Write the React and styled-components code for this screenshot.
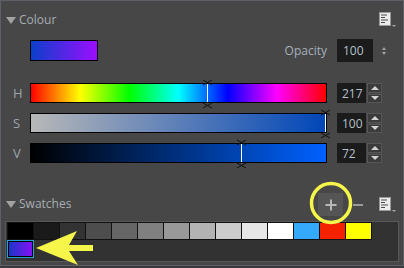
import React from 'react';
import styled, { createGlobalStyle } from 'styled-components';

const GlobalStyle = createGlobalStyle`
  html, body {
    margin: 0;
    padding: 0;
    background: #3a3a3a;
  }
  body {
    font-family: "Open Sans", "Noto Sans", sans-serif;
  }
`;

const Panel = styled.div`
  position: relative;
  box-sizing: border-box;
  width: 404px;
  height: 266px;
  background: #474747;
  border: 1px solid #5c6168;
  overflow: hidden;
`;

const SectionHeader = styled.div`
  display: flex;
  align-items: center;
  height: ${p => p.h}px;
  margin-top: ${p => p.top}px;
  padding: 0 6px 0 5px;
`;

const Caret = styled.span`
  width: 0;
  height: 0;
  border-left: 5.5px solid transparent;
  border-right: 5.5px solid transparent;
  border-top: 7px solid #a3a3a3;
  margin-right: 3px;
`;

const Title = styled.span`
  flex: 1;
  font-size: 12px;
  color: #a7adb3;
  line-height: 1;
  margin-top: -1px;
`;

const PreviewRow = styled.div`
  display: flex;
  align-items: center;
  height: 23px;
  margin-top: 10px;
  padding: 0 17px 0 29px;
`;

const Preview = styled.div`
  box-sizing: border-box;
  width: 68px;
  height: 21px;
  border: 1px solid #000;
  background: linear-gradient(to right, #0b3fca, #9c0eff);
`;

const Spacer = styled.div`
  flex: 1;
`;

const Label = styled.span`
  font-size: 12px;
  color: #a4b0bc;
`;

const NumBox = styled.div`
  box-sizing: border-box;
  width: ${p => p.w}px;
  height: ${p => p.h}px;
  background: #1b1b1b;
  color: #b7c2ce;
  font-size: 12px;
  display: flex;
  align-items: center;
  padding-left: ${p => p.pad}px;
  margin-left: ${p => p.ml || 0}px;
`;

const TinySpin = styled.div`
  display: flex;
  flex-direction: column;
  gap: 2px;
  margin-left: 9px;
`;

const TinyTri = styled.span`
  width: 0;
  height: 0;
  border-left: 2.5px solid transparent;
  border-right: 2.5px solid transparent;
  ${p => (p.up ? 'border-bottom' : 'border-top')}: 3px solid #a0a0a0;
`;

const Sliders = styled.div`
  display: flex;
  flex-direction: column;
  gap: 10px;
  margin-top: 21px;
  padding-left: 11px;
`;

const SliderRow = styled.div`
  display: flex;
  align-items: center;
  height: 20px;
`;

const Channel = styled.span`
  width: 18px;
  font-size: 13px;
  color: #9aa6b0;
  padding-left: 1px;
  box-sizing: border-box;
`;

const Bar = styled.div`
  position: relative;
  box-sizing: border-box;
  width: 297px;
  height: 20px;
  border: 1px solid #000;
  background: ${p => p.bg};
  margin-right: 10px;
`;

const MarkerLine = styled.div`
  position: absolute;
  top: 0;
  bottom: 0;
  width: 1px;
  background: #fff;
`;

const MarkerTicks = styled.svg`
  position: absolute;
  top: -4px;
  overflow: visible;
`;

const Spin = styled.div`
  display: flex;
  flex-direction: column;
  gap: 1px;
  margin-left: 1px;
`;

const SpinButton = styled.div`
  box-sizing: border-box;
  width: 15px;
  height: 9.5px;
  background: #3b3b3b;
  border: 1px solid #565656;
  display: flex;
  align-items: center;
  justify-content: center;
`;

const SpinTri = styled.span`
  width: 0;
  height: 0;
  border-left: 4px solid transparent;
  border-right: 4px solid transparent;
  ${p => (p.up ? 'border-bottom' : 'border-top')}: 4px solid #d2d2d2;
`;

const PlusButton = styled.div`
  position: relative;
  width: 25px;
  height: 23px;
  background: #555555;
  margin-right: 10px;

  &::before,
  &::after {
    content: '';
    position: absolute;
    left: 50%;
    top: 50%;
    background: #b8b8b8;
    transform: translate(-50%, -50%);
  }
  &::before {
    width: 11px;
    height: 2px;
  }
  &::after {
    width: 2px;
    height: 11px;
  }
`;

const Minus = styled.div`
  width: 10px;
  height: 2px;
  background: #9a9a9a;
  margin-right: 16px;
`;

const SwatchArea = styled.div`
  box-sizing: border-box;
  width: 394px;
  height: 41px;
  margin: 5px 0 0 4px;
  border: 1px solid #575757;
  background: #323232;
  padding-left: 1px;
`;

const SwatchGrid = styled.div`
  display: grid;
  grid-template-columns: repeat(14, 26px);
  grid-auto-rows: 18px;
`;

const Swatch = styled.div`
  box-sizing: border-box;
  width: 27px;
  height: 18px;
  border: 1px solid ${p => (p.selected ? '#1fa3d6' : '#121212')};
  background: ${p => p.color};
  box-shadow: ${p => (p.selected ? 'inset 0 0 0 1px #000' : 'none')};
`;

const Overlay = styled.svg`
  position: absolute;
  left: -1px;
  top: -1px;
  pointer-events: none;
`;

const MenuIcon = () => (
  <svg width="18" height="16" viewBox="0 0 18 16">
    <rect x="0.5" y="0.5" width="11" height="13" fill="#ececec" stroke="#9a9a9a" />
    <rect x="2" y="2.5" width="6" height="1" fill="#4a4a4a" />
    <rect x="2" y="5" width="4" height="1" fill="#4a4a4a" />
    <rect x="2" y="7.5" width="7" height="1" fill="#4a4a4a" />
    <rect x="2" y="10" width="4" height="1" fill="#4a4a4a" />
    <path d="M13 13 L17 13 L15 15 Z" fill="#a8a8a8" />
  </svg>
);

const Marker = ({ pos }) => (
  <>
    <MarkerLine style={{ left: pos }} />
    <MarkerTicks style={{ left: pos - 4 }} width="9" height="28">
      <path d="M0 0 L9 5 M9 0 L0 5 M0 28 L9 23 M9 28 L0 23" stroke="#111" strokeWidth="1" />
    </MarkerTicks>
  </>
);

const sliders = [
  {
    name: 'H',
    value: 217,
    pos: 176,
    bg: 'linear-gradient(to right, #f00, #ff0, #0f0, #0ff, #00f, #f0f, #f00)',
  },
  {
    name: 'S',
    value: 100,
    pos: 294,
    bg: 'linear-gradient(to right, #b8b8b8, #0046b8)',
  },
  {
    name: 'V',
    value: 72,
    pos: 210,
    bg: 'linear-gradient(to right, #000, #0061ff)',
  },
];

const swatches = [
  '#000000', '#1a1a1a', '#333333', '#4d4d4d', '#666666', '#808080', '#999999',
  '#b3b3b3', '#cccccc', '#e6e6e6', '#ffffff', '#35a9fa', '#f52200', '#ffff00',
];

const App = () => (
  <>
    <GlobalStyle />
    <Panel>
      <SectionHeader h={18} top={10}>
        <Caret />
        <Title>Colour</Title>
        <MenuIcon />
      </SectionHeader>

      <PreviewRow>
        <Preview />
        <Spacer />
        <Label>Opacity</Label>
        <NumBox w={36} h={23} pad={6} ml={10}>100</NumBox>
        <TinySpin>
          <TinyTri up />
          <TinyTri />
        </TinySpin>
      </PreviewRow>

      <Sliders>
        {sliders.map(s => (
          <SliderRow key={s.name}>
            <Channel>{s.name}</Channel>
            <Bar bg={s.bg}>
              <Marker pos={s.pos} />
            </Bar>
            <NumBox w={29} h={20} pad={5}>{s.value}</NumBox>
            <Spin>
              <SpinButton><SpinTri up /></SpinButton>
              <SpinButton><SpinTri /></SpinButton>
            </Spin>
          </SliderRow>
        ))}
      </Sliders>

      <SectionHeader h={23} top={30}>
        <Caret />
        <Title>Swatches</Title>
        <PlusButton />
        <Minus />
        <MenuIcon />
      </SectionHeader>

      <SwatchArea>
        <SwatchGrid>
          {swatches.map(c => (
            <Swatch key={c} color={c} />
          ))}
          <Swatch selected color="linear-gradient(to right, #1638c6, #8a10f6)" />
        </SwatchGrid>
      </SwatchArea>

      <Overlay width="404" height="268">
        <circle cx="331" cy="203" r="19.5" fill="none" stroke="#f6f64a" strokeWidth="3.5" />
        <polygon
          points="36,248 77,231 69,245 93,245 93,251 69,251 78,265"
          fill="#f6f64a"
        />
      </Overlay>
    </Panel>
  </>
);

export default App;
